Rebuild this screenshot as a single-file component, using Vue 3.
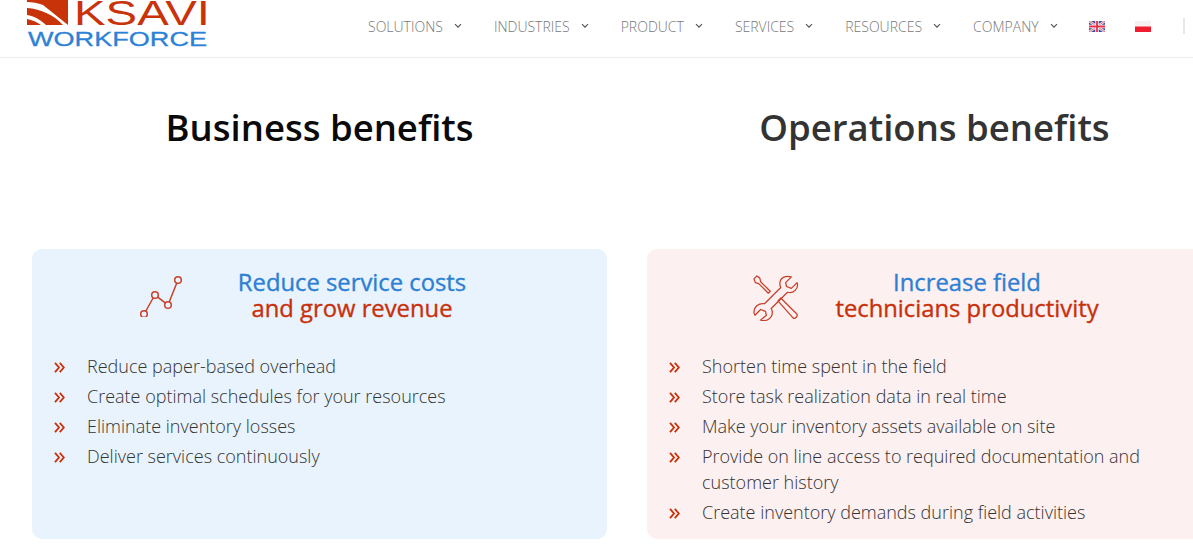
<template>
  <div class="page">
    <header class="topbar">
      <svg class="logo" width="181" height="48" viewBox="0 0 181 48">
        <path d="M0 0H41V25L16 5C11 3 5 2 0 2Z" fill="#c8330a" />
        <path d="M0 8C14 9 27 15 36 25H19C14 20 7 16 0 15Z" fill="#c8330a" />
        <path d="M0 19C5 20 10 22 14 25H0Z" fill="#c8330a" />
        <text x="47" y="25" class="logo-top" textLength="136" lengthAdjust="spacingAndGlyphs">KSAVI</text>
        <text x="1" y="46" class="logo-bottom" textLength="179" lengthAdjust="spacingAndGlyphs">WORKFORCE</text>
      </svg>
      <nav class="nav">
        <a v-for="item in navItems" :key="item" class="nav-item">
          {{ item }}
          <svg width="8" height="6" viewBox="0 0 8 6"><path d="M1 1.200 4 4.200 7 1.200" fill="none" stroke="#555" stroke-width="1.200" /></svg>
        </a>
      </nav>
      <svg class="flag flag-uk" width="16" height="11" viewBox="0 0 16 11">
        <rect width="16" height="11" fill="#3b4f9c" />
        <path d="M0 0 16 11M16 0 0 11" stroke="#e8e8f0" stroke-width="2.400" />
        <path d="M0 0 16 11M16 0 0 11" stroke="#d9506a" stroke-width="0.800" />
        <path d="M8 0V11M0 5.500H16" stroke="#fff" stroke-width="3.400" />
        <path d="M8 0V11M0 5.500H16" stroke="#e4324a" stroke-width="1.800" />
      </svg>
      <svg class="flag flag-pl" width="16" height="11" viewBox="0 0 16 11">
        <rect width="16" height="5.500" fill="#f6f0f0" />
        <rect y="5.500" width="16" height="5.500" fill="#ee1c2e" />
      </svg>
      <span class="divider"></span>
    </header>

    <main class="columns">
      <section v-for="col in columns" :key="col.heading" class="column">
        <h2 class="heading" :class="col.kind">{{ col.heading }}</h2>
        <div class="card" :class="col.kind">
          <div class="card-head">
            <svg v-if="col.kind === 'business'" class="icon" width="44" height="44" viewBox="0 0 44 44" fill="none" stroke="#c8402a" stroke-width="1.500">
              <circle cx="5" cy="41" r="3.300" />
              <circle cx="16" cy="22" r="3.300" />
              <circle cx="29" cy="32" r="3.300" />
              <circle cx="39" cy="7" r="3.300" />
              <path d="M6.600 38.500 14.400 24.500M18.400 23.800 26.600 30.200M30.100 29.200 37.900 9.800" />
            </svg>
            <svg v-else class="icon tools" width="46" height="46" viewBox="0 0 48 48" fill="none" stroke="#c8402a" stroke-width="1.300" stroke-linejoin="round">
              <path d="M1 4 4 1 7 3 8 7 18 17 16 19 6 9 2.500 8Z" />
              <path d="M26 27 29 24 46 41C47 43 44 46 42 45Z" />
              <path d="M46 8 40 14 35 12 34 8 40 2C34 0 28 3 28 9 28 11 28.500 12 29 13L12 30C6 29 1 33 1 39 1 40 1.500 41 2 42L8 36 13 38 14 42 8 47C14 49 21 45 20 38 20 37 19.500 36 19 35L36 18C42 20 48 14 46 8Z" />
            </svg>
            <h3 class="card-title">
              <span class="blue">{{ col.titleTop }}</span>
              <span class="red">{{ col.titleBottom }}</span>
            </h3>
          </div>
          <ul class="list">
            <li v-for="line in col.items" :key="line">
              <svg class="bullet" width="11" height="11" viewBox="0 0 11 11" fill="none" stroke="#c8300a" stroke-width="1.800">
                <path d="M1 .8 5 5.500 1 10.200M5.800 .8 9.800 5.500 5.800 10.200" />
              </svg>
              {{ line }}
            </li>
          </ul>
        </div>
      </section>
    </main>
  </div>
</template>

<script setup>
const navItems = ['SOLUTIONS', 'INDUSTRIES', 'PRODUCT', 'SERVICES', 'RESOURCES', 'COMPANY']

const columns = [
  {
    kind: 'business',
    heading: 'Business benefits',
    titleTop: 'Reduce service costs',
    titleBottom: 'and grow revenue',
    items: [
      'Reduce paper-based overhead',
      'Create optimal schedules for your resources',
      'Eliminate inventory losses',
      'Deliver services continuously'
    ]
  },
  {
    kind: 'operations',
    heading: 'Operations benefits',
    titleTop: 'Increase field',
    titleBottom: 'technicians productivity',
    items: [
      'Shorten time spent in the field',
      'Store task realization data in real time',
      'Make your inventory assets available on site',
      'Provide on line access to required documentation and customer history',
      'Create inventory demands during field activities'
    ]
  }
]
</script>

<style>
html,
body {
  margin: 0;
  overflow: hidden;
  background: #fff;
}
</style>

<style scoped>
.page {
  width: 1193px;
  height: 548px;
  overflow: hidden;
  font-family: "Open Sans", "Liberation Sans", sans-serif;
}
.topbar {
  display: flex;
  align-items: center;
  height: 58px;
  padding: 0 0 5px 27px;
  box-sizing: border-box;
  border-bottom: 1px solid #ececec;
  overflow: hidden;
}
.logo {
  flex: none;
  align-self: flex-start;
}
.logo-top {
  font: 400 35px "Liberation Sans", sans-serif;
  fill: #c8330a;
}
.logo-bottom {
  font: 400 21px "Liberation Sans", sans-serif;
  fill: #2d82d6;
  stroke: #2d82d6;
  stroke-width: 0.3px;
}
.nav {
  display: flex;
  margin-left: 160px;
}
.nav-item {
  display: flex;
  align-items: center;
  gap: 11px;
  margin-right: 32px;
  font-size: 14px;
  font-weight: 300;
  color: #777;
}
.flag-uk {
  margin-left: -1px;
}
.flag-pl {
  margin-left: 30px;
}
.divider {
  width: 2px;
  height: 16px;
  margin-left: 32px;
  background: #e8e8e8;
}
.columns {
  display: flex;
  gap: 40px;
  padding-left: 32px;
}
.column {
  flex: none;
  width: 575px;
}
.heading {
  margin: 43px 0 0;
  height: 148px;
  text-align: center;
  font-size: 36.500px;
  line-height: 52px;
  font-weight: 600;
}
.heading.business {
  color: #0a0a0a;
}
.heading.operations {
  color: #333;
}
.card {
  height: 290px;
  box-sizing: border-box;
  border-radius: 10px;
  padding-top: 20px;
}
.card.business {
  background: #e8f3fd;
}
.card.operations {
  background: #fdf0f0;
}
.card-head {
  display: grid;
  grid-template-columns: 68px 1fr;
  align-items: center;
  padding: 0 98px 0 95px;
}
.icon {
  justify-self: center;
}
.tools {
  margin: 1px 0;
  transform: translate(0, 3px);
}
.card-title {
  margin: 0;
  font-size: 23.800px;
  line-height: 26px;
  font-weight: 400;
  -webkit-text-stroke: 0.35px currentColor;
  text-align: center;
}
.card-title span {
  display: block;
}
.blue {
  color: #2d7fd3;
}
.red {
  color: #c8300a;
}
.list {
  list-style: none;
  margin: 30px 0 0;
  padding: 0 40px 0 55px;
  font-size: 18px;
  line-height: 26px;
  font-weight: 300;
  color: #333;
}
.list li {
  position: relative;
  padding: 2px 0;
}
.bullet {
  position: absolute;
  left: -33px;
  top: 11px;
}
</style>
